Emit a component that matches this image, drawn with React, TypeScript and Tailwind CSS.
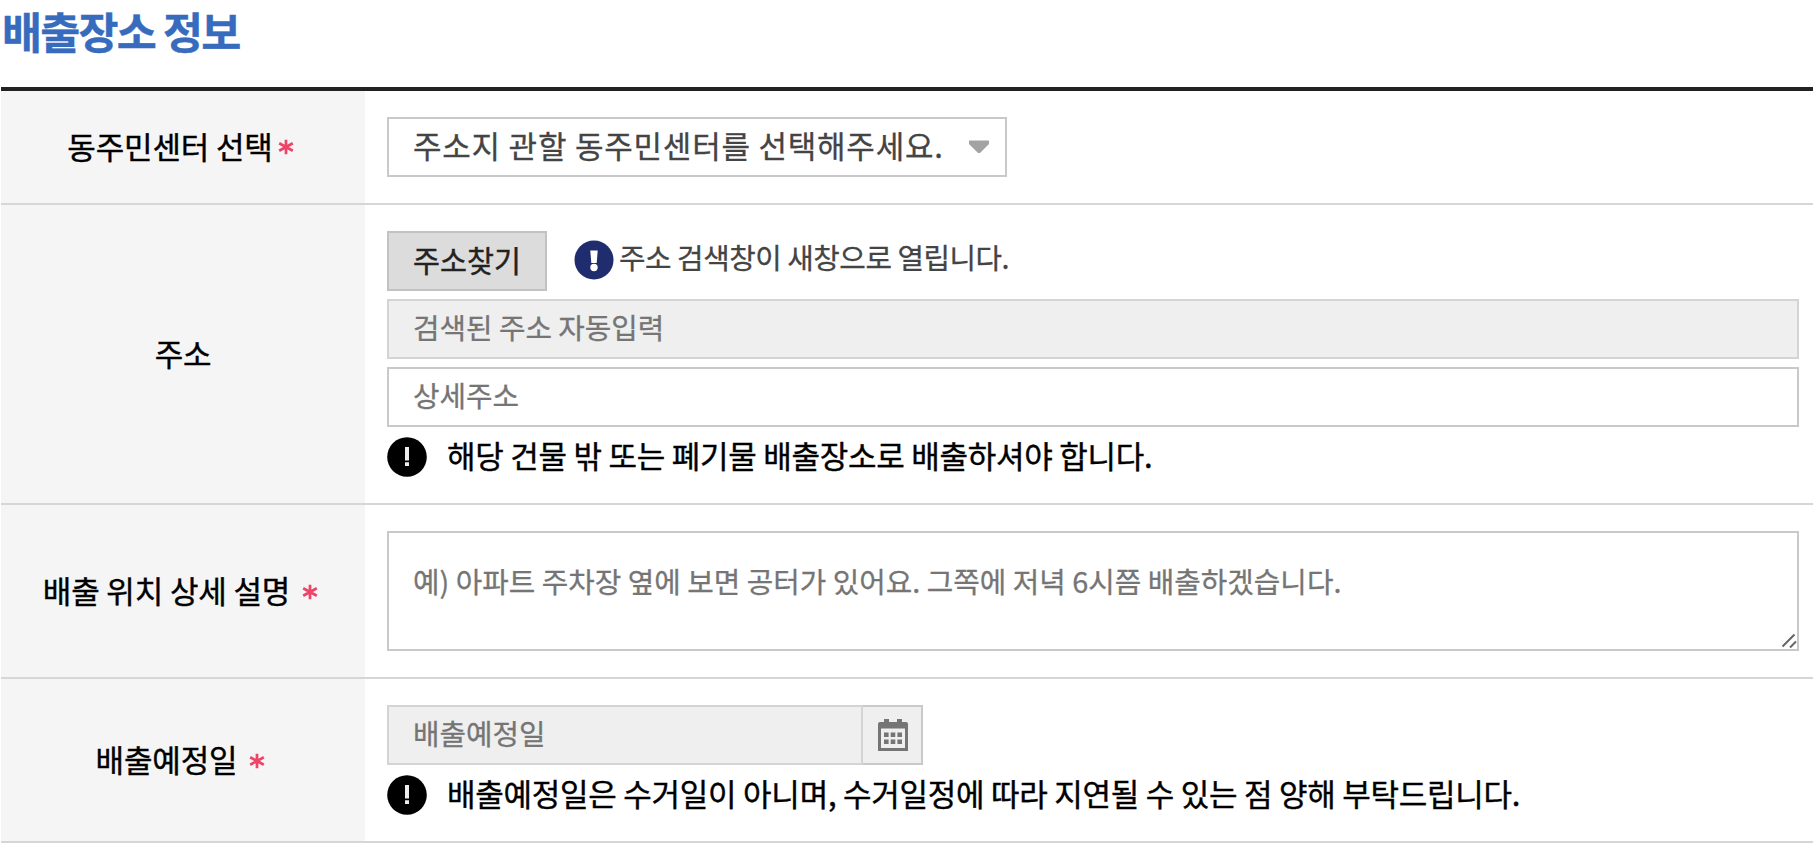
import type { ReactNode } from 'react';

function Required({ className }: { className?: string }) {
  return (
    <svg viewBox="0 0 16 16" className={`mr-[5px] inline-block h-4 w-4 shrink-0 ${className ?? ''}`}>
      <path
        d="M8 0.8V15.2M1.2 4.2L14.8 11.8M14.8 4.2L1.2 11.8"
        stroke="#ee4468"
        strokeWidth="2.7"
        fill="none"
      />
    </svg>
  );
}

function Row({ label, children }: { label: ReactNode; children: ReactNode }) {
  return (
    <div className="flex border-b-2 border-[#d6d6d6]">
      <div className="flex w-[364px] shrink-0 items-center justify-center bg-[#f5f5f5] pb-[2px] text-[31px] tracking-[-0.15px] whitespace-pre text-black [-webkit-text-stroke:0.4px]">
        {label}
      </div>
      <div className="min-w-0 flex-1 py-[26px] pr-[14px] pl-[22px]">{children}</div>
    </div>
  );
}

function Notice({ children }: { children: ReactNode }) {
  return (
    <div className="mt-[10px] flex h-10 items-center">
      <svg viewBox="0 0 40 40" className="h-10 w-10 shrink-0">
        <circle cx="20" cy="20" r="19.8" fill="#000" />
        <path d="M18 10h4v13.500H18zM18 25.300h4v3.600H18z" fill="#eee" />
      </svg>
      <p className="ml-5 pb-1 text-[31px] tracking-[-0.25px] whitespace-nowrap text-black [-webkit-text-stroke:0.4px]">
        {children}
      </p>
    </div>
  );
}

export default function App() {
  return (
    <div className="min-h-[846px] w-full bg-white font-['Noto_Sans_CJK_KR',sans-serif]">
      <h2 className="h-[87px] pl-[2px] text-[43.5px] leading-[61px] font-bold tracking-[-1.8px] text-[#366bbd] [-webkit-text-stroke:0.4px]">
        배출장소 정보
      </h2>

      <div className="ml-[1px] border-t-4 border-[#222]">
        <Row
          label={
            <>
              동주민센터 선택
              <Required className="mt-[2px] ml-[5px]" />
            </>
          }
        >
          <div className="flex h-[60px] w-[620px] items-center justify-between border-2 border-[#c9c9c9] pr-[15px] pl-6">
            <span className="pb-[3px] text-[31px] tracking-[0.78px] whitespace-nowrap text-[#444] [-webkit-text-stroke:0.3px]">
              주소지 관할 동주민센터를 선택해주세요.
            </span>
            <svg viewBox="0 0 22 14" className="h-[14px] w-[22px]">
              <path d="M1 0.500h20v3.500l-9 9h-2l-9-9z" fill="#a3a3a3" />
            </svg>
          </div>
        </Row>

        <Row label="주소">
          <div className="flex items-center">
            <button className="h-[60px] w-[160px] border-2 border-[#c2c2c2] bg-[#dcdcdc] pb-[2px] text-[29.3px] text-[#222] [-webkit-text-stroke:0.4px]">
              주소찾기
            </button>
            <svg viewBox="0 0 40 40" className="mb-[2px] ml-[27px] h-10 w-10">
              <circle cx="20" cy="20" r="19.5" fill="#1f2c6d" />
              <path d="M16.3 10.5h7.4l-1 12.5h-5.4z" fill="#fff" />
              <circle cx="20" cy="27.5" r="3.7" fill="#fff" />
            </svg>
            <span className="ml-[5px] pb-[8px] text-[28.8px] tracking-[-0.45px] whitespace-nowrap text-[#444] [-webkit-text-stroke:0.3px]">
              주소 검색창이 새창으로 열립니다.
            </span>
          </div>
          <div className="mt-2 flex h-[60px] items-center border-2 border-[#d4d4d4] bg-[#efefef] pb-1 pl-6 text-[28.8px] text-[#757575] [-webkit-text-stroke:0.3px]">
            검색된 주소 자동입력
          </div>
          <div className="mt-2 flex h-[60px] items-center border-2 border-[#c9c9c9] pb-1 pl-6 text-[28.8px] text-[#757575] [-webkit-text-stroke:0.3px]">
            상세주소
          </div>
          <Notice>해당 건물 밖 또는 폐기물 배출장소로 배출하셔야 합니다.</Notice>
        </Row>

        <Row
          label={
            <>
              배출 위치 상세 설명
              <Required className="mt-1 ml-3" />
            </>
          }
        >
          <div className="relative h-[120px] border-2 border-[#c9c9c9] pt-[25px] pl-6 text-[28.8px] leading-[46px] tracking-[0.02px] text-[#757575] [-webkit-text-stroke:0.3px]">
            예) 아파트 주차장 옆에 보면 공터가 있어요. 그쪽에 저녁 6시쯤 배출하겠습니다.
            <svg viewBox="0 0 16 16" className="absolute right-0 bottom-0 h-4 w-4">
              <path d="M1.5 13.5L13.5 1.5M9 14.5L15 8.5" stroke="#666" strokeWidth="2" />
            </svg>
          </div>
        </Row>

        <Row
          label={
            <>
              배출예정일
              <Required className="mt-1 ml-3" />
            </>
          }
        >
          <div className="flex h-[60px]">
            <div className="flex w-[476px] items-center border-2 border-[#d4d4d4] bg-[#efefef] pb-1 pl-6 text-[28.8px] text-[#757575] [-webkit-text-stroke:0.3px]">
              배출예정일
            </div>
            <div className="flex w-[60px] items-center border-2 border-l-0 border-[#c9c9c9] bg-[#efefef] pl-[15px]">
              <svg viewBox="0 0 30 32" className="h-8 w-[30px]">
                <path
                  fillRule="evenodd"
                  d="M2 3h4V0h5v3h8V0h5v3h4a2 2 0 0 1 2 2v27H0V5a2 2 0 0 1 2-2zM3 9.500v19.500h24V9.500z"
                  fill="#757575"
                />
                <path
                  d="M6 13.500h4.600v4.500H6zM12.700 13.500h4.600v4.500h-4.600zM19.400 13.500H24v4.500h-4.600zM6 20.500h4.600V25H6zM12.700 20.500h4.600V25h-4.600zM19.400 20.500H24V25h-4.600z"
                  fill="#757575"
                />
              </svg>
            </div>
          </div>
          <Notice>배출예정일은 수거일이 아니며, 수거일정에 따라 지연될 수 있는 점 양해 부탁드립니다.</Notice>
        </Row>
      </div>
    </div>
  );
}
